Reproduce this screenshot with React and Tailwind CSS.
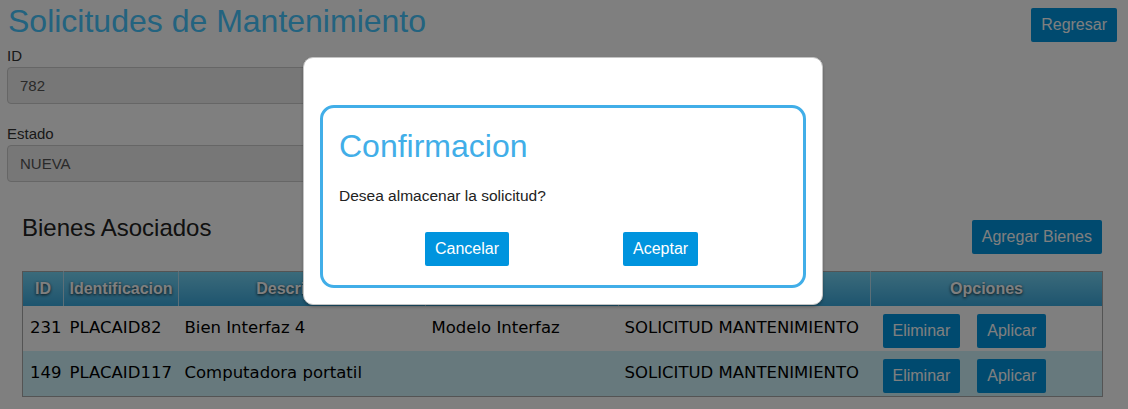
const rows = [
  { id: '231', ident: 'PLACAID82', desc: 'Bien Interfaz 4', modelo: 'Modelo Interfaz', estado: 'SOLICITUD MANTENIMIENTO' },
  { id: '149', ident: 'PLACAID117', desc: 'Computadora portatil', modelo: '', estado: 'SOLICITUD MANTENIMIENTO' },
];

const headers = ['ID', 'Identificacion', 'Descripcion', 'Modelo', 'Estado', 'Opciones'];
const widths = ['w-[41px]', 'w-[115px]', 'w-[247px]', 'w-[193px]', 'w-[252px]', 'w-[232px]'];

const btn = 'h-[34px] rounded-[2px] bg-[#0094de] px-[10px] text-[16px] leading-[34px] text-white';

const App = () => {
  return (
    <div className="relative h-[409px] w-[1128px] overflow-hidden bg-white font-['Liberation_Sans',Arial,sans-serif] text-[#222]">
      {/* Header */}
      <div className="flex items-start justify-between pr-[11px]">
        <h1 className="pl-[8px] pt-[3px] text-[32px] leading-[36px] text-[#46c6ff]">Solicitudes de Mantenimiento</h1>
        <button className={`${btn} mt-[8px]`}>Regresar</button>
      </div>

      {/* Form */}
      <div className="w-[555px] pl-[7px]">
        <label className="mt-[4px] block text-[15px] leading-[20px] text-[#333]">ID</label>
        <div className="mt-[1px] h-[37px] rounded-[4px] border border-[#cccccc] bg-[#eeeeee] pl-[12px] text-[15px] leading-[35px] text-[#555]">
          782
        </div>
        <label className="mt-[20px] block text-[15px] leading-[20px] text-[#333]">Estado</label>
        <div className="mt-[1px] h-[37px] rounded-[4px] border border-[#cccccc] bg-[#eeeeee] pl-[12px] text-[15px] leading-[35px] text-[#555]">
          NUEVA
        </div>
      </div>

      {/* Bienes */}
      <div className="mt-[32px] pl-[22px] pr-[26px]">
        <div className="flex items-start justify-between">
          <h2 className="text-[24px] leading-[28px] text-[#222]">Bienes Asociados</h2>
          <button className={`${btn} mt-[6px] h-[33px] leading-[33px]`}>Agregar Bienes</button>
        </div>
        <table className="mt-[17px] w-[1080px] table-fixed border-collapse border border-[#a9a9a9]">
          <thead>
            <tr className="h-[34px] bg-gradient-to-b from-[#76d6f6] to-[#3aa9dd]">
              {headers.map((h, i) => (
                <th
                  key={h}
                  className={`${widths[i]} border-r border-[#b6dff0] text-center text-[16px] font-bold text-white [text-shadow:0_1px_3px_rgba(0,0,0,0.85)] last:border-r-0`}
                >
                  {h}
                </th>
              ))}
            </tr>
          </thead>
          <tbody className="font-['DejaVu_Sans',Verdana,sans-serif] text-[16.5px] text-black">
            {rows.map((r, i) => (
              <tr key={r.id} className={`h-[45px] ${i === 1 ? 'bg-[#cff3fb]' : 'bg-white'}`}>
                <td className="pl-[7px] align-middle">{r.id}</td>
                <td className="pl-[6px] align-middle">{r.ident}</td>
                <td className="pl-[6px] align-middle">{r.desc}</td>
                <td className="pl-[6px] align-middle">{r.modelo}</td>
                <td className="pl-[6px] align-middle">{r.estado}</td>
                <td className="pb-[3px] pl-[12px] pt-[8px] align-bottom">
                  <div className="flex gap-[17px] font-['Liberation_Sans',Arial,sans-serif]">
                    <button className={btn}>Eliminar</button>
                    <button className={btn}>Aplicar</button>
                  </div>
                </td>
              </tr>
            ))}
          </tbody>
        </table>
      </div>

      {/* Overlay */}
      <div className="absolute inset-0 bg-black/50" />

      {/* Modal */}
      <div className="absolute left-[303px] top-[57px] w-[520px] rounded-[10px] border border-[#c4c4c4] bg-white px-[16px] pb-[16px] pt-[47px] shadow-[0_2px_3px_rgba(0,0,0,0.25)]">
        <div className="rounded-[14px] border-[3px] border-[#41aee8] px-[16px] pb-[19px] pt-[20px]">
          <h3 className="text-[32px] leading-[36px] text-[#41aee8]">Confirmacion</h3>
          <p className="mt-[22px] text-[15.5px] leading-[20px] text-[#222]">Desea almacenar la solicitud?</p>
          <div className="mt-[26px] flex gap-[114px] pl-[86px]">
            <button className={`${btn} bg-[#0091da] px-[9px]`}>Cancelar</button>
            <button className={`${btn} bg-[#0091da]`}>Aceptar</button>
          </div>
        </div>
      </div>
    </div>
  );
};

export default App;
